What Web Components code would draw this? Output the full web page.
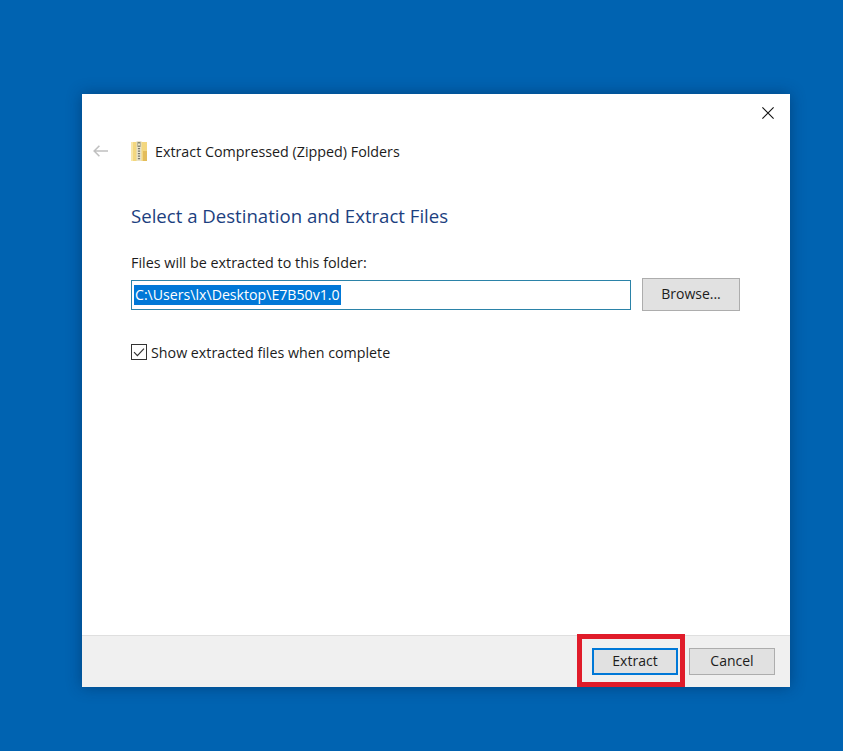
<!DOCTYPE html>
<html>
<head>
<meta charset="utf-8">
<title>Extract Compressed (Zipped) Folders</title>
<style>
html,body{margin:0;height:100%;}
body{
    background:#0063b1;
    font-family:"Open Sans","Noto Sans","Liberation Sans",sans-serif;
    color:#1a1a1a;
    overflow:hidden;
}
</style>
</head>
<body>
<wizard-window>
    <wizard-header slot="header">Extract Compressed (Zipped) Folders</wizard-header>
    <h-title slot="title">Select a Destination and Extract Files</h-title>
    <path-field slot="field" label="Files will be extracted to this folder:" value="C:\Users\lx\Desktop\E7B50v1.0"></path-field>
    <check-row slot="check">Show extracted files when complete</check-row>
    <win-button slot="footer" primary marked>Extract</win-button>
    <win-button slot="footer">Cancel</win-button>
</wizard-window>

<script>
class WizardWindow extends HTMLElement {
    constructor() {
        super();
        this.attachShadow({ mode: 'open' });
    }
    connectedCallback() {
        this.shadowRoot.innerHTML = /*html*/`
        <style>
        :host{
            display:flex;
            flex-direction:column;
            box-sizing:border-box;
            width:708px;
            height:593px;
            margin:94px 0 0 82px;
            background:#fff;
            box-shadow:0 0 14px rgba(0,30,70,.45);
        }
        .close{
            display:flex;
            justify-content:flex-end;
            padding:13px 16px 0 0;
            height:12px;
        }
        .close svg{display:block;}
        .content{
            flex:1;
            display:flex;
            flex-direction:column;
            padding:0 50px 0 11px;
        }
        .body{
            display:flex;
            flex-direction:column;
            padding-left:38px;
        }
        .footer{
            display:flex;
            justify-content:flex-end;
            align-items:center;
            gap:11px;
            height:51px;
            padding-right:15px;
            background:#f0f0f0;
            border-top:1px solid #dfdfdf;
        }
        </style>
        <div class="close">
            <svg width="12" height="12" viewBox="0 0 12 12" fill="none" stroke="#111" stroke-width="1.1"><path d="M.4.4l11.2 11.2M11.6.4L.4 11.6"/></svg>
        </div>
        <div class="content">
            <slot name="header"></slot>
            <div class="body">
                <slot name="title"></slot>
                <slot name="field"></slot>
                <slot name="check"></slot>
            </div>
        </div>
        <div class="footer"><slot name="footer"></slot></div>
        `;
    }
}
customElements.define('wizard-window', WizardWindow);

class WizardHeader extends HTMLElement {
    constructor() {
        super();
        this.attachShadow({ mode: 'open' });
    }
    connectedCallback() {
        this.shadowRoot.innerHTML = /*html*/`
        <style>
        :host{
            display:flex;
            align-items:center;
            height:22px;
            margin-top:21px;
            font-size:14.3px;
            color:#1c1c1c;
        }
        .back{margin-right:23px;display:block;}
        .zip{margin-right:8px;display:block;}
        </style>
        <svg class="back" width="15" height="12" viewBox="0 0 15 12" fill="none" stroke="#c0c0c0" stroke-width="1.6"><path d="M15 6H1.2M6.4.8L1.2 6l5.2 5.2"/></svg>
        <svg class="zip" width="16" height="20" viewBox="0 0 16 20">
            <rect x="0" y="1" width="16" height="19" fill="#f3d77f"/>
            <rect x="0" y="1" width="2" height="19" fill="#f9e7a8"/>
            <rect x="12" y="10" width="4" height="10" fill="#e3bc5a"/>
            <rect x="5.5" y="0" width="5" height="20" fill="#e9e3c8"/>
            <rect x="6.5" y="1" width="3" height="5" fill="#8a8a70"/>
            <rect x="7" y="2.5" width="2" height="2" fill="#e9e3c8"/>
            <path d="M8 7v12" stroke="#77776a" stroke-width="2.2" stroke-dasharray="1.3 1.2"/>
        </svg>
        <span><slot></slot></span>
        `;
    }
}
customElements.define('wizard-header', WizardHeader);

class HTitle extends HTMLElement {
    constructor() {
        super();
        this.attachShadow({ mode: 'open' });
    }
    connectedCallback() {
        this.shadowRoot.innerHTML = /*html*/`
        <style>
        :host{
            display:block;
            margin-top:41px;
            font-size:18.6px;
            line-height:26px;
            color:#1c3f80;
        }
        </style>
        <slot></slot>
        `;
    }
}
customElements.define('h-title', HTitle);

class PathField extends HTMLElement {
    constructor() {
        super();
        this.attachShadow({ mode: 'open' });
    }
    connectedCallback() {
        this.shadowRoot.innerHTML = /*html*/`
        <style>
        :host{
            display:block;
            margin-top:24px;
            font-size:14.35px;
            color:#1c1c1c;
        }
        .label{line-height:20px;height:20px;}
        .row{
            display:flex;
            align-items:center;
            gap:11px;
            margin-top:5px;
        }
        .input{
            box-sizing:border-box;
            width:500px;
            height:30px;
            border:1px solid #2b83a8;
            display:flex;
            align-items:center;
            padding-left:2px;
        }
        .sel{
            background:#0078d7;
            color:#fff;
            height:20px;
            line-height:20px;
            padding:0 1px;
            font-size:14.15px;
        }
        </style>
        <div class="label">${this.getAttribute('label')}</div>
        <div class="row">
            <div class="input"><span class="sel">${this.getAttribute('value')}</span></div>
            <win-button browse>Browse...</win-button>
        </div>
        `;
    }
}
customElements.define('path-field', PathField);

class CheckRow extends HTMLElement {
    constructor() {
        super();
        this.attachShadow({ mode: 'open' });
    }
    connectedCallback() {
        this.shadowRoot.innerHTML = /*html*/`
        <style>
        :host{
            display:flex;
            align-items:center;
            gap:4px;
            margin-top:30px;
            height:22px;
            font-size:14.25px;
            color:#1c1c1c;
        }
        svg{display:block;}
        </style>
        <svg width="16" height="16" viewBox="0 0 16 16" fill="#fff" stroke="#333">
            <rect x=".5" y=".5" width="15" height="15"/>
            <path d="M3 8.2l3.4 3.4L13 4.6" fill="none" stroke-width="1.2"/>
        </svg>
        <span><slot></slot></span>
        `;
    }
}
customElements.define('check-row', CheckRow);

class WinButton extends HTMLElement {
    constructor() {
        super();
        this.attachShadow({ mode: 'open' });
    }
    connectedCallback() {
        this.shadowRoot.innerHTML = /*html*/`
        <style>
        :host{
            display:flex;
            position:relative;
            align-items:center;
            justify-content:center;
            box-sizing:border-box;
            width:86px;
            height:27px;
            padding-bottom:2px;
            background:#e1e1e1;
            border:1px solid #adadad;
            font-size:14px;
            color:#1c1c1c;
        }
        :host([primary]){border:2px solid #0078d7;}
        :host([browse]){width:98px;height:33px;}
        .mark{
            position:absolute;
            left:-17px;
            top:-16px;
            width:98px;
            height:43px;
            border:5px solid #e01c2a;
        }
        </style>
        <slot></slot>
        ${this.hasAttribute('marked') ? '<div class="mark"></div>' : ''}
        `;
    }
}
customElements.define('win-button', WinButton);
</script>
</body>
</html>
